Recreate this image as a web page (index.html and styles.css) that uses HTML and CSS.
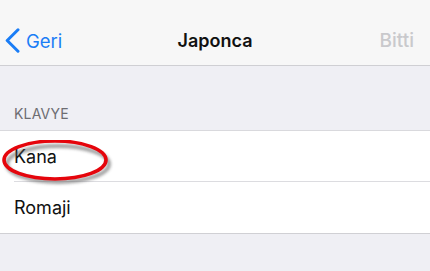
FILE: index.html
```html
<!DOCTYPE html>
<html>
<head>
<meta charset="utf-8">
<link rel="stylesheet" href="styles.css">
</head>
<body>
<div class="screen">
  <header class="nav">
    <div class="back">
      <svg class="chev" width="15" height="25" viewBox="0 0 15 25"><path d="M13 1.8 L2.2 12.5 L13 23.2" fill="none" stroke="#1a7df6" stroke-width="3" stroke-linecap="round" stroke-linejoin="round"/></svg>
      <span>Geri</span>
    </div>
    <div class="title">Japonca</div>
    <div class="done">Bitti</div>
  </header>
  <div class="section-title">KLAVYE</div>
  <div class="group">
    <div class="row"><span>Kana</span></div>
    <div class="row"><span>Romaji</span></div>
  </div>
  <svg class="mark" width="120" height="52" viewBox="0 0 120 52">
    <defs>
      <filter id="sh" x="-20%" y="-40%" width="140%" height="180%">
        <feGaussianBlur stdDeviation="1.8"/>
      </filter>
    </defs>
    <ellipse cx="56" cy="24" rx="51" ry="18" fill="none" stroke="#555" stroke-width="4" opacity="0.55" filter="url(#sh)"/>
    <ellipse cx="53" cy="20" rx="51" ry="19" fill="none" stroke="#e5050c" stroke-width="3.6"/>
  </svg>
</div>
</body>
</html>
```
FILE: styles.css
```css
html, body { margin: 0; padding: 0; }
body {
  width: 430px;
  height: 271px;
  overflow: hidden;
  background: #efeff4;
  font-family: Inter, "Liberation Sans", sans-serif;
}
.screen { position: relative; width: 430px; height: 271px; }
.nav {
  height: 66px;
  box-sizing: border-box;
  background: #f7f7f7;
  border-bottom: 1px solid #cfcfd3;
  display: flex;
  align-items: center;
  justify-content: space-between;
  padding: 16px 16px 0 5px;
  position: relative;
}
.back {
  display: flex;
  align-items: center;
  color: #1a7df6;
  font-size: 18.5px;
  gap: 6px;
}
.chev { display: block; }
.title {
  position: absolute;
  left: 0; right: 0;
  top: 16px; bottom: 0;
  display: flex;
  align-items: center;
  justify-content: center;
  font-size: 18px;
  font-weight: 600;
  color: #111;
  pointer-events: none;
}
.done { color: #c9c9cc; font-size: 19px; font-weight: 500; }
.section-title {
  padding: 40px 14px 8px;
  font-size: 14px;
  color: #6d6d72;
  letter-spacing: 0.2px;
  line-height: 16px;
}
.group {
  background: #fff;
  border-top: 1px solid #d9d9dd;
  border-bottom: 1px solid #d0d0d4;
}
.row {
  height: 50px;
  display: flex;
  align-items: center;
  margin-left: 14px;
  font-size: 18px;
  color: #111;
}
.row + .row { border-top: 1px solid #dcdce0; height: 51px; }
.mark { position: absolute; left: 2px; top: 140px; }
```
